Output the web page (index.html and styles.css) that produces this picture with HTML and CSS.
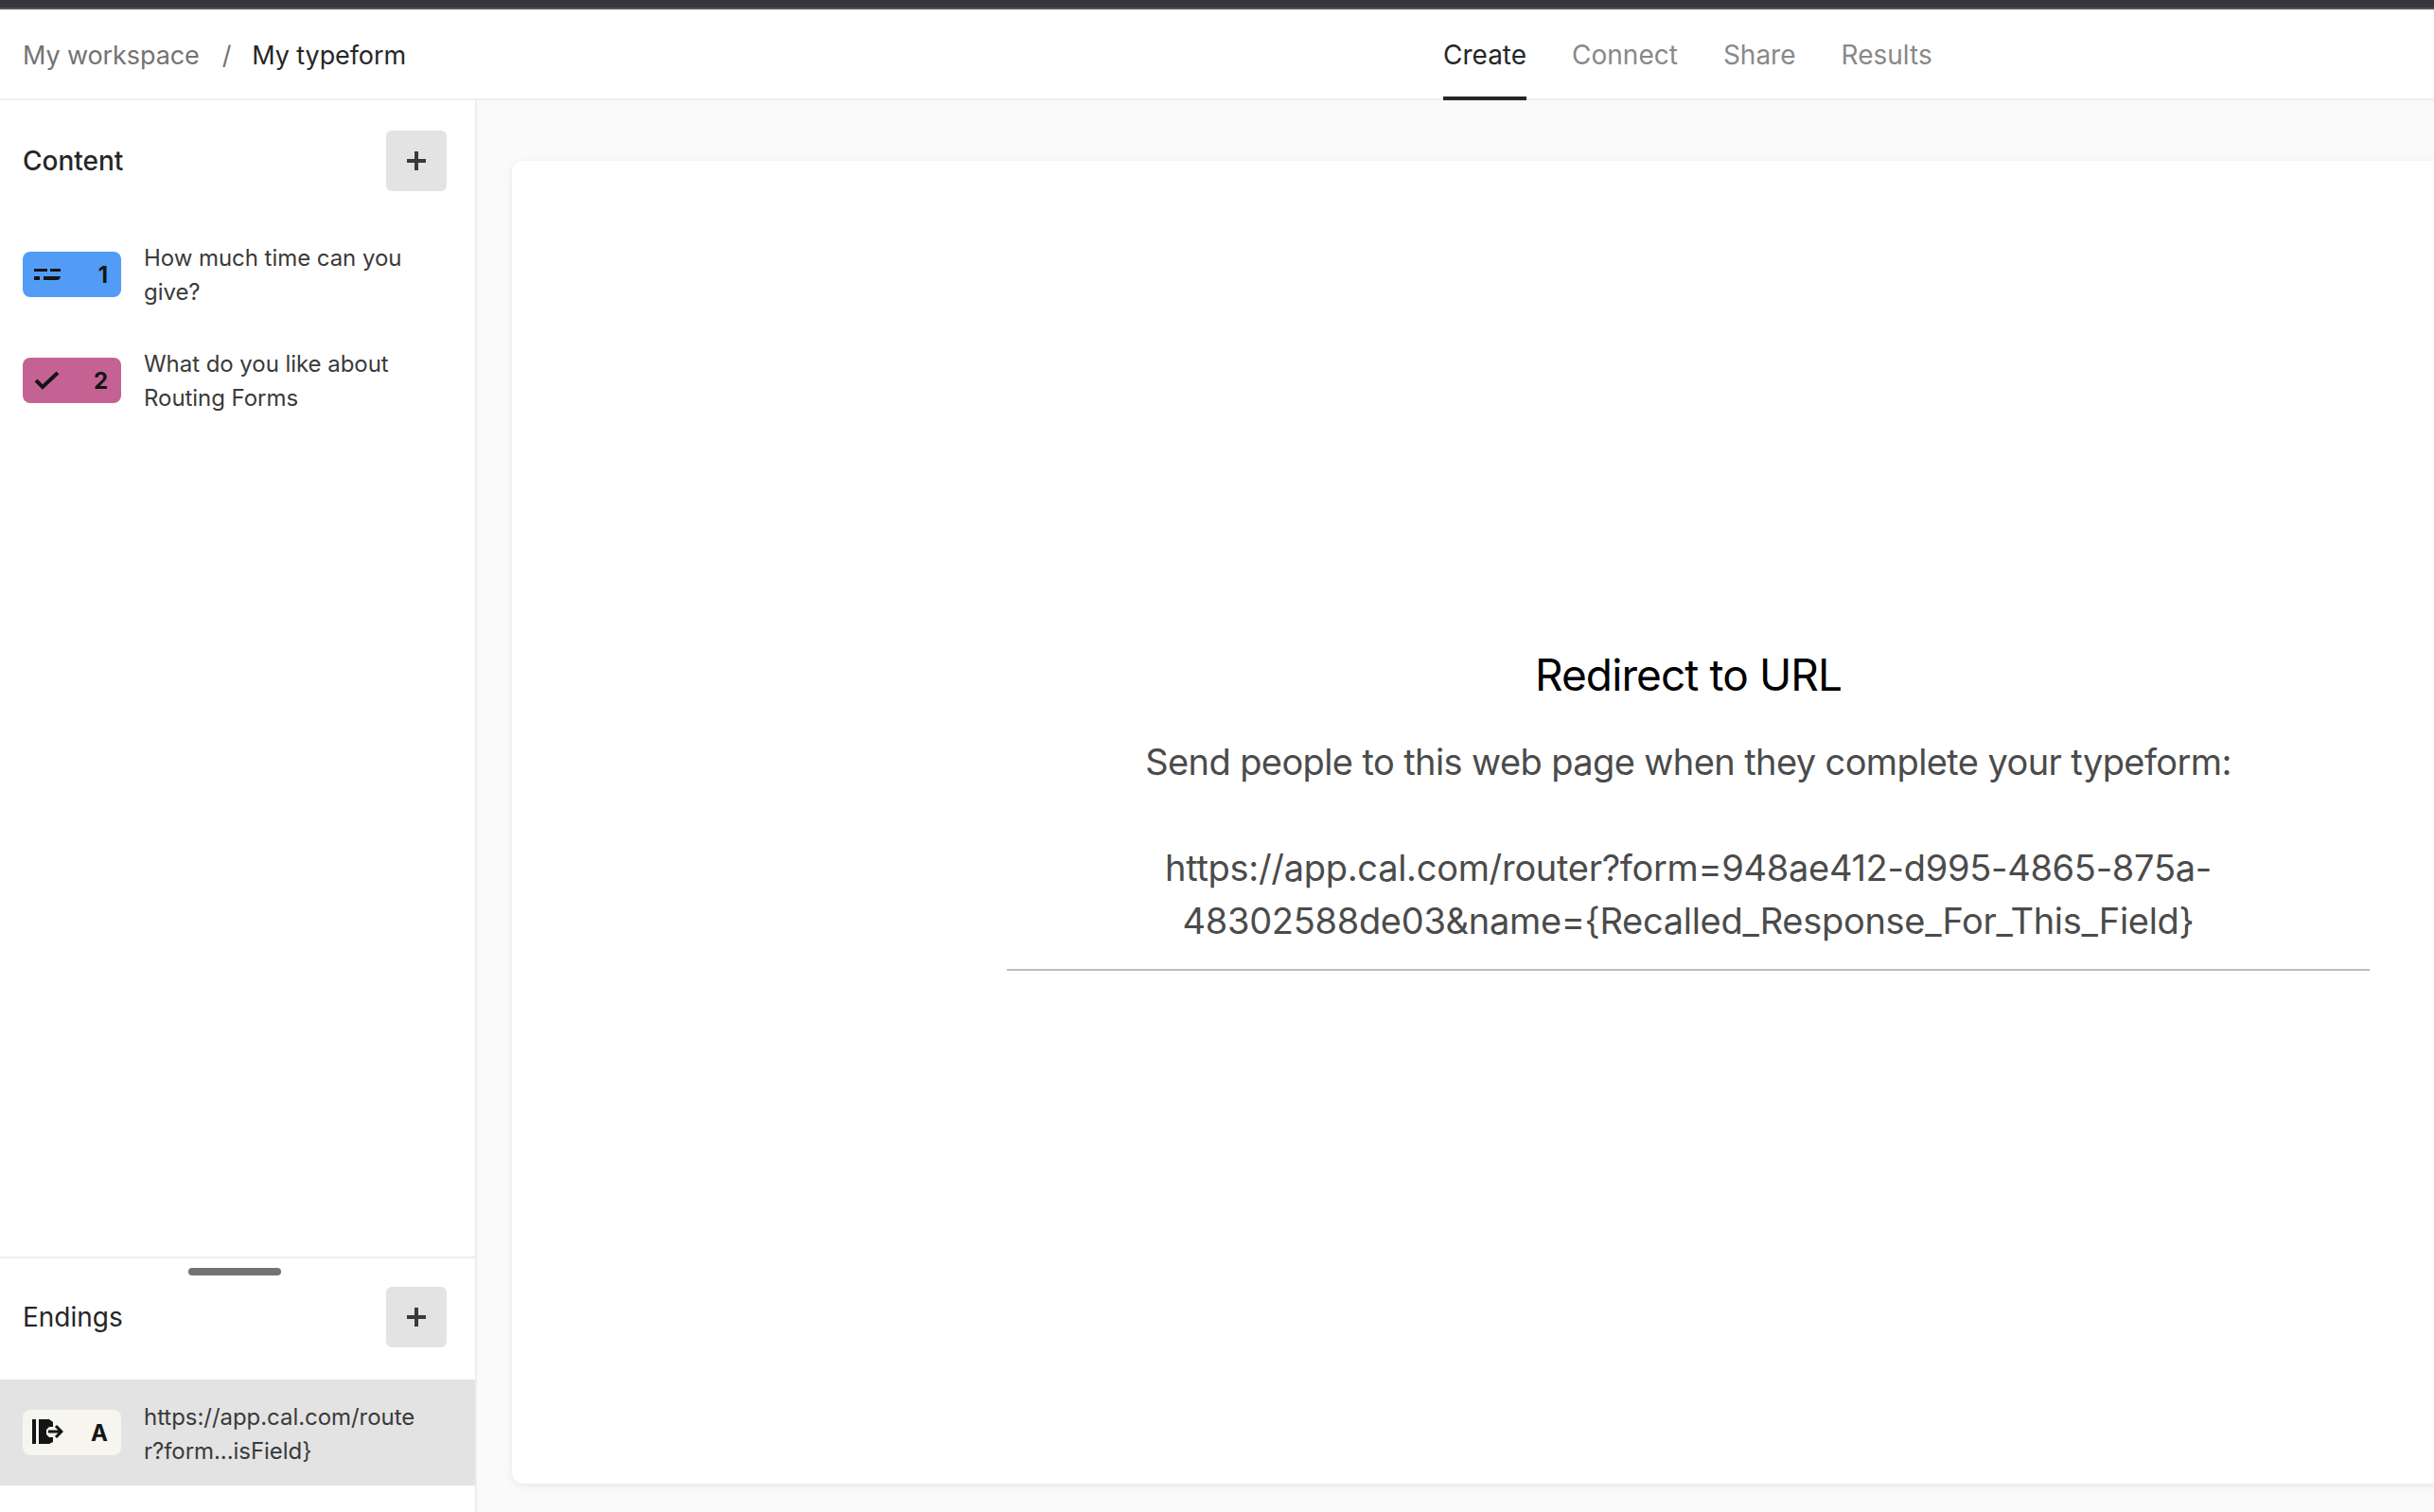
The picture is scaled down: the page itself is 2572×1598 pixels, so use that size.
FILE: index.html

```html
<!DOCTYPE html>
<html lang="en">
<head>
  <meta charset="UTF-8">
  <title>My typeform</title>
  <link rel="stylesheet" href="styles.css">
</head>
<body>
  <div class="top-strip"></div>

  <header class="header">
    <nav class="breadcrumb">
      <span class="crumb-muted">My workspace</span>
      <span class="crumb-sep">/</span>
      <span class="crumb-current">My typeform</span>
    </nav>
    <nav class="tabs">
      <a class="tab active">Create</a>
      <a class="tab">Connect</a>
      <a class="tab">Share</a>
      <a class="tab">Results</a>
    </nav>
  </header>

  <div class="layout">
    <aside class="sidebar">
      <section class="content-panel">
        <div class="panel-head">
          <h2>Content</h2>
          <button class="add-btn">
            <svg width="20" height="20" viewBox="0 0 20 20"><path d="M10 0v20M0 10h20" stroke="#3a3a3a" stroke-width="4"/></svg>
          </button>
        </div>
        <ul class="item-list">
          <li class="item">
            <span class="badge badge-blue">
              <svg width="28" height="12" viewBox="0 0 28 12"><path d="M0 0h14v3H0zM17 0h11v3H17zM0 8h6v4H0zM10 8h18l-1 3-2 1H10z" fill="#151515"/></svg>
              <b>1</b>
            </span>
            <span class="item-text">How much time can you give?</span>
          </li>
          <li class="item">
            <span class="badge badge-pink">
              <svg width="27" height="20" viewBox="0 0 27 20"><path d="M2 10l7 7L25 2" fill="none" stroke="#151515" stroke-width="4"/></svg>
              <b>2</b>
            </span>
            <span class="item-text">What do you like about Routing Forms</span>
          </li>
        </ul>
      </section>

      <section class="endings-panel">
        <div class="handle"></div>
        <div class="panel-head endings-head">
          <h2 class="endings-title">Endings</h2>
          <button class="add-btn">
            <svg width="20" height="20" viewBox="0 0 20 20"><path d="M10 0v20M0 10h20" stroke="#3a3a3a" stroke-width="4"/></svg>
          </button>
        </div>
        <div class="item item-selected">
          <span class="badge badge-light">
            <svg width="33" height="28" viewBox="0 0 33 28"><path d="M0 0h4v26H0z" fill="#151515"/><path d="M7 0h11l4 3v5h-4l-3 3v5l3 3h4v5l-4 2H7z" fill="#151515"/><path d="M17 13h13M25 7l6 6-6 6" fill="none" stroke="#151515" stroke-width="3"/></svg>
            <b>A</b>
          </span>
          <span class="item-text url-text">https://app.cal.com/route r?form...isField}</span>
        </div>
      </section>
    </aside>

    <main class="canvas">
      <div class="card">
        <div class="card-body">
          <h1>Redirect to URL</h1>
          <p class="lead">Send people to this web page when they complete your typeform:</p>
          <p class="url">https://app.cal.com/router?form=948ae412-d995-4865-875a-48302588de03&amp;name={Recalled_Response_For_This_Field}</p>
        </div>
      </div>
    </main>
  </div>
</body>
</html>
```

FILE: styles.css

```css
* {
  box-sizing: border-box;
}
html, body {
  height: 100%;
}
body {
  margin: 0;
  display: flex;
  flex-direction: column;
  overflow: hidden;
  background: #fff;
  color: #262627;
  font-family: Inter, "Liberation Sans", sans-serif;
}
.top-strip {
  height: 10px;
  background: #36373c;
  border-bottom: 2px solid #55565b;
}
.header {
  display: grid;
  grid-template-columns: 1525px 1fr;
  height: 96px;
  border-bottom: 2px solid #eeeeee;
}
.breadcrumb {
  display: flex;
  align-items: center;
  padding-left: 24px;
  font-size: 27px;
  letter-spacing: -0.1px;
}
.crumb-muted {
  color: #737373;
}
.crumb-sep {
  margin: 0 22px 0 24px;
  color: #737373;
}
.tabs {
  display: flex;
  gap: 48px;
}
.tab {
  display: flex;
  align-items: center;
  height: 96px;
  font-size: 28px;
  color: #898989;
}
.tab.active {
  color: #262627;
  box-shadow: inset 0 -4px 0 #262627;
}
.layout {
  flex: 1;
  display: flex;
  min-height: 0;
}
.sidebar {
  width: 504px;
  flex-shrink: 0;
  display: flex;
  flex-direction: column;
  border-right: 2px solid #eeeeee;
}
.content-panel {
  flex: 1;
}
.panel-head {
  display: flex;
  align-items: center;
  justify-content: space-between;
  padding: 32px 30px 0 24px;
}
h2 {
  margin: 0;
  font-size: 28px;
  font-weight: 500;
}
.endings-title {
  font-weight: 400;
}
.add-btn {
  width: 64px;
  height: 64px;
  display: flex;
  align-items: center;
  justify-content: center;
  padding: 0;
  border: none;
  border-radius: 6px;
  background: #e3e3e3;
}
.item-list {
  list-style: none;
  margin: 0;
  padding: 32px 0 0;
}
.item {
  display: flex;
  align-items: center;
  gap: 24px;
  height: 112px;
  padding: 0 30px 0 24px;
}
.badge {
  width: 104px;
  height: 48px;
  flex-shrink: 0;
  display: flex;
  align-items: center;
  justify-content: space-between;
  padding: 0 14px 0 12px;
  border-radius: 8px;
  font-size: 24px;
}
.badge b {
  font-weight: 700;
  color: #151515;
}
.badge-blue {
  background: #529cf6;
}
.badge-pink {
  background: #c46393;
}
.badge-light {
  background: #f6f5f0;
  padding-left: 10px;
}
.item-text {
  margin-top: 2px;
  font-size: 24px;
  line-height: 36px;
  letter-spacing: -0.05px;
  color: #3a3a3a;
}
.url-text {
  margin-top: 4px;
  word-break: break-word;
  width: 300px;
}
.endings-panel {
  height: 270px;
  border-top: 2px solid #eeeeee;
}
.handle {
  width: 98px;
  height: 8px;
  margin: 10px auto 0 199px;
  border-radius: 4px;
  background: #737373;
}
.endings-head {
  padding-top: 12px;
}
.item-selected {
  margin-top: 34px;
  background: #e3e3e3;
}
.canvas {
  flex: 1;
  min-width: 0;
  background: #fafafa;
  padding: 64px 0 30px 37px;
}
.card {
  height: 100%;
  width: 2100px;
  display: flex;
  align-items: center;
  padding-left: 523px;
  padding-bottom: 29px;
  border-radius: 12px;
  background: #fff;
  box-shadow: 0 2px 8px rgba(0, 0, 0, 0.08);
}
.card-body {
  width: 1440px;
  text-align: center;
  padding-bottom: 2px;
  border-bottom: 2px solid #bcbcbc;
}
h1 {
  margin: 0 0 34px;
  font-size: 46px;
  line-height: 60px;
  letter-spacing: -0.9px;
  font-weight: 400;
  color: #000;
}
.lead {
  margin: 0 0 56px;
  font-size: 38px;
  line-height: 56px;
  letter-spacing: -0.6px;
  color: #4b4b4b;
}
.url {
  margin: 0 0 21px;
  font-size: 38px;
  line-height: 56px;
  letter-spacing: -0.3px;
  color: #4b4b4b;
}
```
